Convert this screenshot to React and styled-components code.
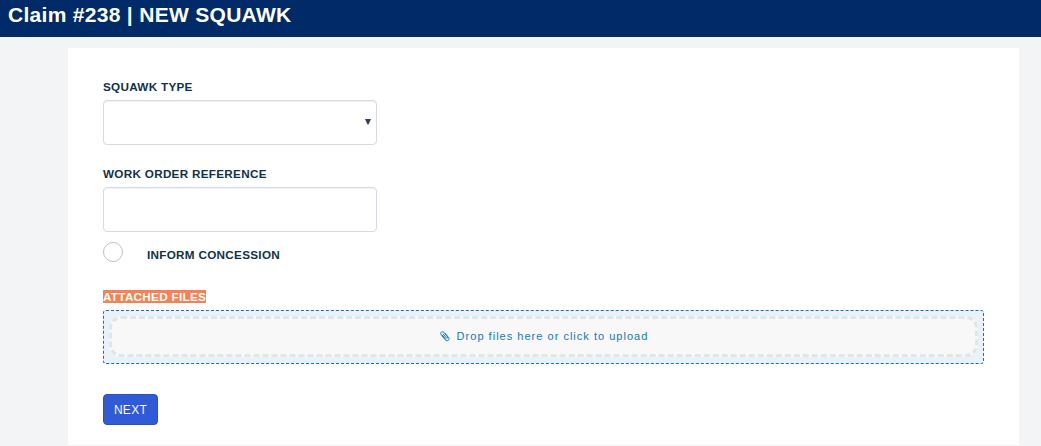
import React from "react";
import styled, { createGlobalStyle } from "styled-components";

const GlobalStyle = createGlobalStyle`
  *, *::before, *::after { box-sizing: border-box; }
  body {
    margin: 0;
    background: #f2f4f6;
    font-family: "Liberation Sans", Arial, sans-serif;
    overflow: hidden;
  }
`;

const Header = styled.header`
  height: 37px;
  padding: 2px 8px 0;
  background: #002b68;
`;

const Title = styled.h1`
  margin: 0;
  color: #fff;
  font-size: 21px;
  line-height: 26px;
  font-weight: 700;
  letter-spacing: 0.3px;
  white-space: nowrap;
`;

const Panel = styled.form`
  height: 397px;
  margin: 11px 22px 1px 68px;
  padding: 32px 35px 0;
  background: #fff;
`;

const Field = styled.div`
  display: flex;
  flex-direction: column;
  align-items: flex-start;
  width: 274px;
  margin-bottom: ${(p) => p.$gap}px;
`;

const Label = styled.label`
  color: #0f324d;
  font-size: 11.7px;
  font-weight: 700;
  line-height: 13px;
  letter-spacing: 0.3px;
  white-space: nowrap;
`;

const MarkedLabel = styled(Label)`
  display: block;
  width: 103px;
  height: 13px;
  color: #fff;
  background: #f48354;
`;

const Control = styled.div`
  display: flex;
  align-items: center;
  justify-content: flex-end;
  width: 100%;
  height: 45px;
  margin-top: 7px;
  padding-right: 5px;
  border: 1px solid #d5dae5;
  border-radius: 4px;
  background: #fff;
  box-shadow: inset 0 1px 1px rgba(0, 0, 0, 0.06);
`;

const Arrow = styled.svg`
  width: 6px;
  height: 6px;
  margin-top: -1px;
  fill: #32435e;
`;

const RadioRow = styled.div`
  display: flex;
  align-items: flex-start;
  gap: 24px;
  height: 20px;
  margin-bottom: 28px;

  ${Label} { margin-top: 6px; }
`;

const Radio = styled.span`
  width: 20px;
  height: 20px;
  border: 1px solid #c1c1c1;
  border-radius: 50%;
`;

const Dropzone = styled.div`
  height: 54px;
  margin-top: 7px;
  padding: 5px;
  border: 1px dashed #0d77bd;
  border-radius: 3px;
  background: #e9f2fa;
`;

const DropTarget = styled.div`
  display: flex;
  align-items: center;
  justify-content: center;
  gap: 6px;
  height: 41px;
  padding-left: 1px;
  border: 3px dashed #dfe6ec;
  border-radius: 12px;
  background: #f8f8f8;
  color: #1779ba;
  font-size: 11.05px;
  line-height: 13px;
  letter-spacing: 1px;
`;

const Clip = styled.svg`
  width: 11px;
  height: 11px;
  fill: none;
  stroke: currentColor;
  stroke-width: 1;
  stroke-linecap: round;
  stroke-linejoin: round;
`;

const NextButton = styled.button`
  width: 55px;
  height: 31px;
  margin-top: 30px;
  padding: 0;
  border: 1px solid #2850c4;
  border-radius: 4px;
  background: #305bd6;
  color: #fff;
  font: 12px/18px "Liberation Sans", Arial, sans-serif;
  letter-spacing: 0.3px;
`;

export default function App() {
  return (
    <>
      <GlobalStyle />
      <Header>
        <Title>Claim #238 | NEW SQUAWK</Title>
      </Header>
      <Panel>
        <Field $gap={22}>
          <Label>SQUAWK TYPE</Label>
          <Control>
            <Arrow viewBox="0 0 6 6"><path d="M0 0h6L3.5 5.5h-1z" /></Arrow>
          </Control>
        </Field>
        <Field $gap={10}>
          <Label>WORK ORDER REFERENCE</Label>
          <Control />
        </Field>
        <RadioRow>
          <Radio />
          <Label>INFORM CONCESSION</Label>
        </RadioRow>
        <MarkedLabel>ATTACHED FILES</MarkedLabel>
        <Dropzone>
          <DropTarget>
            <Clip viewBox="0.7 0.4 11 11">
              <path d="M4 3.6 7 7.2c.9 1 2 .1 1.2-.9L4.8 1.9C3.2.1.3 2 1.8 4l4 5.1c2 2.3 5.2.1 3.4-2.2L5.8 2.7M3 4.5l3.2 4" />
            </Clip>
            <span>Drop files here or click to upload</span>
          </DropTarget>
        </Dropzone>
        <NextButton type="button">NEXT</NextButton>
      </Panel>
    </>
  );
}
